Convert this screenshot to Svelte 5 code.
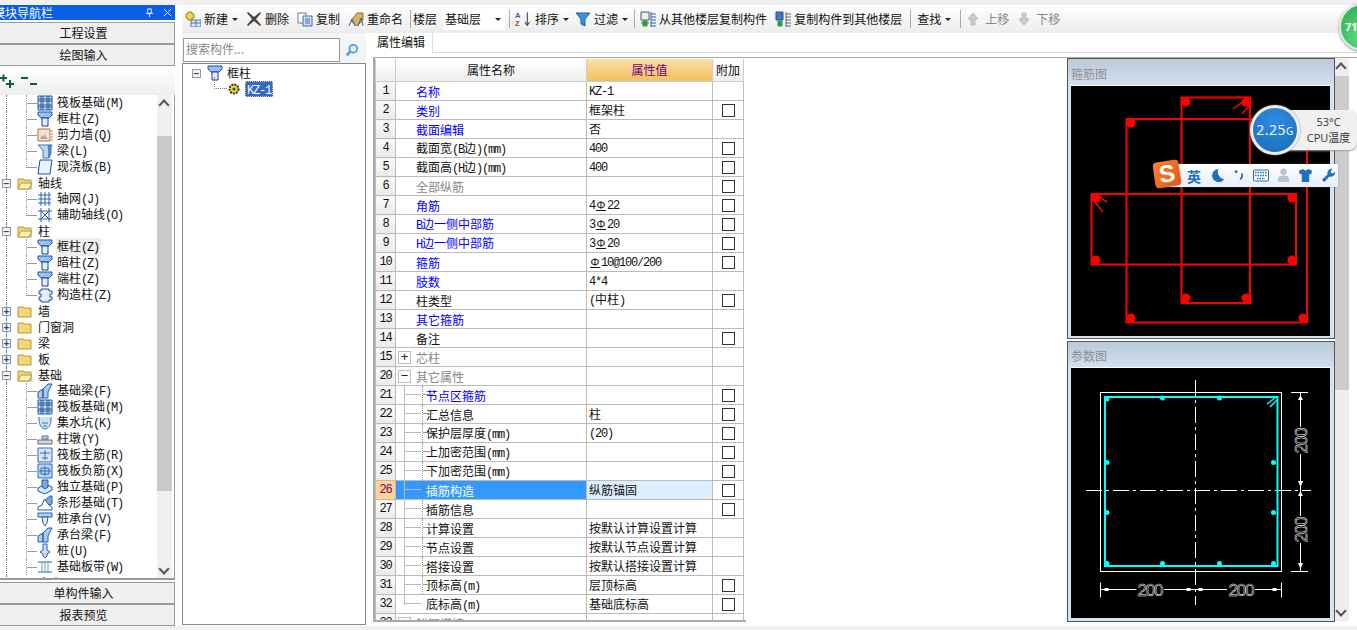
<script>
  const icons = {
    col: [["M1 1h14v3l-3 3H4L1 4z", "#9cc0ee", "#1b4f9c"], ["M5 7h6v8H5z", "#e6efff", "#123f8c"]],
    raft: [["M1 1h14v14H1z", "#d5e4f7", "#1f5aa0"], ["M1 4h14M1 6h14M1 10h14M1 12h14M4 1v14M6 1v14M10 1v14M12 1v14", "none", "#1f5aa0"]],
    wall: [["M1 2h12v12H1z", "#efe4d8", "#b5703a"], ["M3 12l2-4 1 2 2-3 1 3 2 2z", "#aaa", "none"], ["M14 4h2M14 7h2M14 10h2M14 13h2", "none", "#e07820"]],
    beam: [["M1 2h14L12 7v8H6V7z", "#bcd6f4", "#3a74bb"], ["M11 3l3-1v8l-2 5V7z", "#5c94d6", "#3a74bb"]],
    slab: [["M3 1h12l-2 14H1z", "#e8f1fc", "#1c56a3"]],
    axis: [["M1 4h13M1 8h13M1 12h13M4 1v14M8 1v14M12 1v14", "none", "#2a62b0"]],
    aux: [["M1 4h14M4 1v14M12 1v14M1 12h14M4 4l8 8M12 4l-8 8", "none", "#2a62b0"]],
    ctor: [["M4 2h8v2h3v3h-2v3h2v3h-3v2H4v-2H2v-3h2V7H2V4h2z", "#e3edfa", "#1c4f9a"]],
    fbeam: [["M1 15V9l5-3v9zM6 6l5-5h4l-4 8v6H6z", "#a9cbf0", "#245fa8"]],
    pit: [["M2 2v3c0 5 3 9 6 9s6-4 6-9V2", "#cfe2f7", "#3473bd"], ["M5 8h6M6 11h4", "none", "#3473bd"]],
    pier: [["M5 8V5h6v3zM1 9h14v4H1z", "#d5d9df", "#5b6b80"]],
    mainbar: [["M1 1h14v14H1z", "#d9e8fa", "#2c6ab8"], ["M3 6h10M8 3v10M5 11h6", "none", "#2c6ab8"]],
    negbar: [["M1 1h14v14H1z", "#bcd5f2", "#2c6ab8"], ["M2 8h12M8 3v10M4 5h8v6H4z", "none", "#2c6ab8"]],
    solo: [["M1 9l7-4 7 3v3l-7 4-7-3z", "#d7e6f8", "#1f5aa0"], ["M5 1h6v7l-3 2-3-2z", "#7ea9de", "#1f5aa0"]],
    strip: [["M1 15v-3l4-2 2-5h3l2 5 3 2v3z", "#fff", "#245fa8"], ["M8 5l5-4h2v8l-3 1z", "#7fa9dc", "#245fa8"]],
    cap: [["M1 2h14v4H1z", "#b6d0f0", "#245fa8"], ["M5 6h6l-1 6-2 3-2-3z", "#e2edfb", "#245fa8"]],
    pile: [["M6 1h4v6l3 2-3 2v2l-2 2-2-2v-2L3 9l3-2z", "#c8dcf4", "#245fa8"]],
    band: [["M1 3h14M1 13h14", "none", "#245fa8"], ["M5 3v10M8 3v10M11 3v10", "none", "#6f97cc"]],
    add: [["M3 1h4v2h2v4H7v2H3V7H1V3h2z", "#f4d24a", "#a8861c"], ["M6 9h10v7H6z", "#dce9f8", "#4a78b0"], ["M6 12h10M11 9v7", "none", "#4a78b0"]],
    del: [["M2 1l6 5 6-5 1 1-5 6 5 6-1 1-6-5-6 5-1-1 5-6-5-6z", "#444", "none"]],
    copy: [["M1 2h8v10H1z", "#fff", "#5f7ea6"], ["M6 5h9v10H6z", "#cfe0f4", "#3f6ea8"], ["M8 8h5M8 10h5M8 12h5", "none", "#3f6ea8"]],
    rename: [["M3 10L9 2h6v7l-6 6z", "#d9b45a", "#8c6f2c"], ["M1 15l3-7 3 7M10 15l3-8 2 8", "none", "#2a62b0"]],
    filter: [["M1 2h14L10 8v7l-4-2V8z", "#3f8fdc", "#1c5fa6"]],
    fromfloor: [["M1 1h8v8H1z", "#eee", "#555"], ["M3 10h4v5H3zM1 12h8", "#27a040", "#27a040"], ["M11 3h5M11 6h5M11 9h5M11 12h5M11 15h5M11 1v15", "none", "#2a62b0"]],
    tofloor: [["M1 1h7v8H1z", "#3f78cc", "#234f96"], ["M3 10h4v5H3z", "#27a040", "#27a040"], ["M11 3h5M11 6h5M11 9h5M11 12h5M11 15h5M11 1v15", "none", "#667"]],
    up: [["M8 2l5 6h-3v6H6V8H3z", "#ccc", "#bbb"]],
    down: [["M8 14l5-6h-3V2H6v6H3z", "#ccc", "#bbb"]]
  };

  const navRows = [
    { k: "raft", t: "筏板基础(M)" },
    { k: "col", t: "框柱(Z)" },
    { k: "wall", t: "剪力墙(Q)" },
    { k: "beam", t: "梁(L)" },
    { k: "slab", t: "现浇板(B)", last: true },
    { g: "open", t: "轴线" },
    { k: "axis", t: "轴网(J)" },
    { k: "aux", t: "辅助轴线(O)", last: true },
    { g: "open", t: "柱" },
    { k: "col", t: "框柱(Z)", hover: true },
    { k: "col", t: "暗柱(Z)" },
    { k: "col", t: "端柱(Z)" },
    { k: "ctor", t: "构造柱(Z)", last: true },
    { g: "closed", t: "墙" },
    { g: "closed", t: "门窗洞" },
    { g: "closed", t: "梁" },
    { g: "closed", t: "板" },
    { g: "open", t: "基础" },
    { k: "fbeam", t: "基础梁(F)" },
    { k: "raft", t: "筏板基础(M)" },
    { k: "pit", t: "集水坑(K)" },
    { k: "pier", t: "柱墩(Y)" },
    { k: "mainbar", t: "筏板主筋(R)" },
    { k: "negbar", t: "筏板负筋(X)" },
    { k: "solo", t: "独立基础(P)" },
    { k: "strip", t: "条形基础(T)" },
    { k: "cap", t: "桩承台(V)" },
    { k: "fbeam", t: "承台梁(F)" },
    { k: "pile", t: "桩(U)" },
    { k: "band", t: "基础板带(W)" },
    { g: "closed", t: "土方" }
  ];

  // n, name, value, has checkbox, colour, tree kind
  const props = [
    [1, "名称", "KZ-1", false, "blue"],
    [2, "类别", "框架柱", true, "blue"],
    [3, "截面编辑", "否", false, "blue"],
    [4, "截面宽(B边)(mm)", "400", true, ""],
    [5, "截面高(H边)(mm)", "400", true, ""],
    [6, "全部纵筋", "", true, "gray"],
    [7, "角筋", "4Φ22", true, "blue"],
    [8, "B边一侧中部筋", "3Φ20", true, "blue"],
    [9, "H边一侧中部筋", "3Φ20", true, "blue"],
    [10, "箍筋", "Φ10@100/200", true, "blue"],
    [11, "肢数", "4*4", false, "blue"],
    [12, "柱类型", "(中柱)", true, ""],
    [13, "其它箍筋", "", false, "blue"],
    [14, "备注", "", true, ""],
    [15, "芯柱", "", false, "gray", "plus"],
    [20, "其它属性", "", false, "gray", "minus"],
    [21, "节点区箍筋", "", true, "blue", "child"],
    [22, "汇总信息", "柱", true, "", "child"],
    [23, "保护层厚度(mm)", "(20)", true, "", "child"],
    [24, "上加密范围(mm)", "", true, "", "child"],
    [25, "下加密范围(mm)", "", true, "", "child"],
    [26, "插筋构造", "纵筋锚固", true, "", "child"],
    [27, "插筋信息", "", true, "", "child"],
    [28, "计算设置", "按默认计算设置计算", false, "", "child"],
    [29, "节点设置", "按默认节点设置计算", false, "", "child"],
    [30, "搭接设置", "按默认搭接设置计算", false, "", "child"],
    [31, "顶标高(m)", "层顶标高", true, "", "child"],
    [32, "底标高(m)", "基础底标高", true, "", "childlast"],
    [33, "锚固搭接", "", false, "gray", "plus"]
  ];

  const split = (t) => t.split(/([\x20-\x7e]+|Φ)/).filter(Boolean);
  const isEn = (p) => /^[\x20-\x7e]/.test(p);

  const redRects = [
    [1181.5, 97.5, 68.5, 205.5],
    [1126.5, 119, 180.5, 203.5],
    [1091.5, 194, 204.5, 70.5]
  ];
  const redDots = [
    [1186, 102], [1246, 102], [1131, 123], [1096, 198], [1292, 198], [1096, 260],
    [1292, 260], [1186, 298], [1246, 298], [1131, 318], [1303, 318]
  ];
  const cyanDots = [
    [1107, 399], [1162.5, 398], [1219.5, 398], [1107, 462.5], [1107, 512.5], [1273.5, 462.5],
    [1273.5, 512.5], [1107, 563.5], [1162.5, 563.5], [1219.5, 563.5], [1273.5, 563.5]
  ];
  const ticks = [1106.5, 1188.5, 1200.5, 1274.5];
</script>

{#snippet icon(name)}
  <svg class="ico" viewBox="0 0 16 16">
    {#each icons[name] as [d, fill, stroke]}
      <path {d} {fill} {stroke} stroke-width="1" />
    {/each}
  </svg>
{/snippet}

{#snippet txt(t)}
  {#each split(t) as p}
    {#if p === "Φ"}<span class="bar">Φ</span>{:else if isEn(p)}<span class="en">{p}</span>{:else}{p}{/if}
  {/each}
{/snippet}

{#snippet arrow()}
  <i class="caret"></i>
{/snippet}

<div class="page">
  <div class="topstrip"></div>
  <div class="shell">
    <aside class="nav">
      <div class="navtitle">
        <span class="navname">模块导航栏</span>
        <svg class="pin" viewBox="0 0 10 10"><path d="M3 1h4v5H3zM1 6h8M5 6v4" fill="none" stroke="#fff" /></svg>
        <svg class="close" viewBox="0 0 10 10"><path d="M1 1l8 8M9 1l-8 8" fill="none" stroke="#fff" /></svg>
      </div>
      <button class="navbtn">工程设置</button>
      <button class="navbtn">绘图输入</button>
      <div class="navtools">
        <svg width="14" height="14" viewBox="0 0 14 14"><path d="M0 4h7M3.500 0.500v7M6 10h8M10 6v8" fill="none" stroke="#0c5a52" stroke-width="2" /></svg>
        <svg width="18" height="14" viewBox="0 0 18 14"><path d="M1 4h7M10 10h7" fill="none" stroke="#0c5a52" stroke-width="2" /></svg>
      </div>
      <div class="navtree">
        <div class="rows">
          {#each navRows as r}
            {#if r.g}
              <div class="row group">
                <span class="exp">{r.g === "open" ? "−" : "+"}</span>
                <svg class="folder" viewBox="0 0 16 13">
                  <path d="M1 12V2h5l1 1h7v9z" fill="#f6d679" stroke="#b8963c" />
                  {#if r.g === "open"}<path d="M1 12l3-6h11l-3 6z" fill="#fff0bd" stroke="#b8963c" />{/if}
                </svg>
                <span class="grouplabel">{r.t}</span>
              </div>
            {:else}
              <div class="row child" class:last={r.last}>
                {@render icon(r.k)}
                <span class="childlabel" class:hover={r.hover}>{@render txt(r.t)}</span>
              </div>
            {/if}
          {/each}
        </div>
        <div class="navscroll">
          <span class="sarrow"></span>
          <div class="sthumb"></div>
          <span class="sarrow"></span>
        </div>
      </div>
      <button class="navbtn low">单构件输入</button>
      <button class="navbtn">报表预览</button>
    </aside>

    <div class="work">
      <div class="toolbar">
        <span class="tool">{@render icon("add")}<span>新建</span>{@render arrow()}</span>
        <span class="tool">{@render icon("del")}<span>删除</span></span>
        <span class="tool">{@render icon("copy")}<span>复制</span></span>
        <span class="tool rn">{@render icon("rename")}<span>重命名</span></span>
        <i class="sep first"></i>
        <span class="floorlabel">楼层</span>
        <span class="combo">基础层{@render arrow()}</span>
        <i class="sep"></i>
        <span class="tool sort">
          <svg class="ico az" viewBox="0 0 18 16">
            <text x="0" y="7" class="azt a">A</text>
            <text x="0" y="15" class="azt z">Z</text>
            <path d="M13 1v13M10.500 11l2.500 4 2.500-4" fill="none" stroke="#222" />
          </svg>
          <span>排序</span>{@render arrow()}
        </span>
        <span class="tool sort">{@render icon("filter")}<span>过滤</span>{@render arrow()}</span>
        <i class="sep"></i>
        <span class="tool">{@render icon("fromfloor")}<span>从其他楼层复制构件</span></span>
        <span class="tool">{@render icon("tofloor")}<span>复制构件到其他楼层</span></span>
        <i class="sep wide"></i>
        <span class="tool find">查找{@render arrow()}</span>
        <i class="sep tight"></i>
        <span class="tool off">{@render icon("up")}<span>上移</span></span>
        <span class="tool off">{@render icon("down")}<span>下移</span></span>
      </div>

      <div class="below">
        <section class="comp">
          <div class="searchrow">
            <span class="search">搜索构件...</span>
            <svg class="lens" viewBox="0 0 16 16"><circle cx="9.500" cy="6.500" r="4.500" fill="#e3f1fd" stroke="#4d9fe0" stroke-width="2" /><path d="M6 10l-4 4" stroke="#4d9fe0" stroke-width="3" /></svg>
          </div>
          <div class="comptree">
            <div class="comprow top">
              <span class="exp small">−</span>
              {@render icon("col")}
              <span class="toplabel">框柱</span>
            </div>
            <div class="comprow kid">
              <svg class="gear" viewBox="0 0 12 12"><circle cx="6" cy="6" r="4.500" fill="#f5e21c" stroke="#333" stroke-dasharray="2 1" stroke-width="2" /><circle cx="6" cy="6" r="1.500" fill="#333" /></svg>
              <span class="picked"><span class="en">KZ-1</span></span>
            </div>
          </div>
        </section>

        <main class="main">
          <div class="tabs"><span class="tab">属性编辑</span></div>
          <div class="body">
            <div class="grid">
              <table>
                <colgroup><col class="c0" /><col class="c1" /><col class="c2" /><col class="c3" /></colgroup>
                <thead>
                  <tr>
                    <th></th>
                    <th>属性名称</th>
                    <th class="hot">属性值</th>
                    <th>附加</th>
                  </tr>
                </thead>
                <tbody>
                  {#each props as [n, name, value, check, color, tree]}
                    <tr class:on={n === 26}>
                      <td class="num">{n}</td>
                      <td class="name {color} {tree || ''}">
                        {#if tree === "plus" || tree === "minus"}
                          <span class="box">{tree === "plus" ? "+" : "−"}</span>
                        {/if}
                        <span class="nm">{@render txt(name)}</span>
                      </td>
                      <td class="val">{@render txt(value)}</td>
                      <td class="add">{#if check}<span class="check"></span>{/if}</td>
                    </tr>
                  {/each}
                </tbody>
              </table>
            </div>

            <div class="figs">
              <div class="panel first">
                <h3>箍筋图</h3>
                <svg class="canvas" viewBox="1071 86 259 250">
                  <rect x="1071" y="86" width="259" height="250" fill="#000" />
                  {#each redRects as [x, y, width, height]}
                    <rect {x} {y} {width} {height} fill="none" stroke="#f00" stroke-width="2" />
                  {/each}
                  {#each redDots as [cx, cy]}
                    <circle {cx} {cy} r="4.500" fill="#f00" />
                  {/each}
                  <path d="M1233 109l15-11M1242 114l8-9M1096 195l11 7M1094 201l9 11" fill="none" stroke="#f00" stroke-width="1.500" />
                </svg>
              </div>
              <div class="panel">
                <h3>参数图</h3>
                <svg class="canvas" viewBox="1071 368 259 250">
                  <rect x="1071" y="368" width="259" height="250" fill="#000" />
                  <rect x="1100.500" y="392.500" width="181" height="179" fill="none" stroke="#fff" />
                  <path d="M1195.500 380v225M1086 490.500h225" fill="none" stroke="#fff" stroke-dasharray="16 4 3 4" />
                  <rect x="1105" y="397" width="172.500" height="169" fill="none" stroke="#0ff" stroke-width="2" />
                  <path d="M1267 404l9-7M1270 407l7-7" stroke="#0ff" stroke-width="1.500" />
                  {#each cyanDots as [cx, cy]}
                    <circle {cx} {cy} r="2.500" fill="#0ff" />
                  {/each}
                  <path d="M1291 392.500h17M1291 571.500h17M1300.500 392.500V427M1300.500 454V516M1300.500 543V571M1100.500 582.500v15M1281.500 582.500v15M1100.500 589.500h36M1164 589.500h63M1255 589.500h26.500" fill="none" stroke="#fff" />
                  <path d="M1298 400l2.500-5 2.500 5zM1298 481h5l-2.500 6zM1298 496l2.500-5 2.500 5zM1298 563h5l-2.500 6z" fill="#fff" />
                  {#each ticks as x}
                    <rect x={x - 2} y="588" width="4" height="3" fill="#fff" />
                  {/each}
                  <text class="dim" x="1150.500" y="596" textLength="26">200</text>
                  <text class="dim" x="1241.500" y="596" textLength="26">200</text>
                  <text class="dim" transform="translate(1306.500 440.500) rotate(-90)" textLength="26">200</text>
                  <text class="dim" transform="translate(1306.500 529.500) rotate(-90)" textLength="26">200</text>
                </svg>
              </div>
            </div>

            <div class="figscroll">
              <span class="sarrow"></span>
              <div class="fthumb"></div>
              <span class="sarrow end"></span>
            </div>
          </div>
        </main>
      </div>
    </div>
  </div>
  <div class="status"></div>

  <div class="ball"><span>71</span></div>

  <div class="cpu">
    <div class="cpuball">2.25<small>G</small></div>
    <div class="cpuinfo"><span>53°C</span><span>CPU温度</span></div>
  </div>

  <div class="ime">
    <span class="logo">S</span>
    <span class="imech">英</span>
    <svg class="w15" viewBox="0 0 16 16"><path d="M9 1A7 7 0 1 0 15 12 8 8 0 0 1 9 1z" fill="#1e6fc0" /></svg>
    <svg class="w12" viewBox="0 0 12 16"><circle cx="3" cy="4" r="1.500" fill="#1e6fc0" /><path d="M9 6c1 3 0 5-2 6" fill="none" stroke="#1e6fc0" stroke-width="2" /></svg>
    <svg class="w16" viewBox="0 0 16 14"><rect x="0.500" y="1.500" width="15" height="11" rx="1" fill="#fff" stroke="#1e6fc0" /><path d="M2 4h12M2 7h12M4 10h8" stroke="#1e6fc0" stroke-width="1.500" stroke-dasharray="1.500 1" /></svg>
    <svg class="w13" viewBox="0 0 14 16"><circle cx="7" cy="4" r="3.500" fill="#b7c3d2" /><path d="M1 15v-3c0-3 3-4 6-4s6 1 6 4v3z" fill="#b7c3d2" /></svg>
    <svg class="w15" viewBox="0 0 16 16"><path d="M5 1L1 3l1 4 2-1v9h8V6l2 1 1-4-4-2-3 2z" fill="#1e6fc0" /></svg>
    <svg class="w15" viewBox="0 0 16 16"><path d="M15 4l-3 2-2-2 2-3a4.500 4.500 0 0 0-5 6L1 12.500 3.500 15 9 9a4.500 4.500 0 0 0 6-5z" fill="#1e6fc0" /></svg>
  </div>
</div>

<style>
  :global(body) {
    margin: 0;
    background: #fff;
  }

  .page {
    position: relative;
    width: 1357px;
    height: 630px;
    overflow: hidden;
    display: flex;
    flex-direction: column;
    font: 12px/16px "Noto Sans CJK SC", sans-serif;
    color: #111;
    background: #fff;
  }

  .topstrip {
    height: 5px;
    background: #f0f0f0;
  }

  .shell {
    display: flex;
    gap: 7px;
    height: 621px;
  }

  .status {
    height: 4px;
    background: #f0f0f0;
  }

  .en {
    font-family: "Liberation Mono", monospace;
    font-size: 12px;
    letter-spacing: -1.2px;
  }

  .bar {
    display: inline-block;
    width: 10px;
    height: 10px;
    margin: 0 1px;
    font-size: 11px;
    line-height: 9px;
    text-align: center;
    border-bottom: 1px solid #111;
  }

  .ico {
    flex: none;
    width: 16px;
    height: 16px;
  }

  /* left navigation */
  .nav {
    flex: none;
    width: 175px;
    display: flex;
    flex-direction: column;
  }

  .navtitle {
    height: 15px;
    margin-bottom: 2px;
    background: #0b5fe6;
    color: #fff;
    display: flex;
    align-items: center;
    overflow: hidden;
    position: relative;
  }

  .navname {
    margin-left: -7px;
    font-size: 12px;
  }

  .pin,
  .close {
    position: absolute;
    top: 3px;
    width: 9px;
    height: 9px;
  }

  .pin {
    left: 145px;
  }

  .close {
    left: 163px;
  }

  .navbtn {
    flex: none;
    height: 22px;
    margin: 0;
    padding: 0 7px 0 0;
    background: #f0f0f0;
    border: 1px solid #999;
    border-width: 1px 1px 1px 0;
    font: inherit;
    color: #111;
  }

  .navbtn.low {
    margin-top: 2px;
  }

  .navtools {
    height: 29px;
    display: flex;
    align-items: center;
    gap: 6px;
    box-sizing: border-box;
    padding-top: 1px;
    background: linear-gradient(#fff, #eee);
  }

  .navtree {
    height: 485px;
    display: flex;
    overflow: hidden;
    background: #fff;
    border-right: 1px solid #999;
    border-bottom: 2px solid #999;
    box-sizing: border-box;
  }

  .rows {
    width: 157px;
    flex: none;
  }

  .row {
    position: relative;
    height: 16px;
    display: flex;
    align-items: center;
    white-space: nowrap;
  }

  .row::before {
    content: "";
    position: absolute;
    left: 6px;
    top: 0;
    bottom: 0;
    border-left: 1px dotted #777;
  }

  .group .exp {
    margin-left: 2px;
  }

  .exp {
    position: relative;
    flex: none;
    box-sizing: border-box;
    width: 9px;
    height: 9px;
    border: 1px solid #999;
    background: #eef1f6;
    color: #234a8a;
    font: bold 10px/7px "Liberation Sans", sans-serif;
    text-align: center;
  }

  .folder {
    flex: none;
    width: 16px;
    height: 13px;
    margin-left: 6px;
  }

  .grouplabel {
    margin-left: 5px;
  }

  .child {
    padding-left: 37px;
  }

  .child::after {
    content: "";
    position: absolute;
    left: 26px;
    top: 0;
    bottom: 0;
    width: 10px;
    border-left: 1px dotted #777;
    background: linear-gradient(#777, #777) no-repeat 0 8px / 10px 1px;
    opacity: 0.75;
  }

  .child.last::after {
    bottom: 7px;
  }

  .childlabel {
    margin-left: 3px;
    padding: 0 2px 0 1px;
  }

  .childlabel.hover {
    background: #eee;
  }

  .navscroll {
    width: 15px;
    display: flex;
    flex-direction: column;
    align-items: center;
    background: #f0f0f0;
    position: relative;
    overflow: hidden;
  }

  .sarrow {
    flex: none;
    height: 0;
  }

  .sarrow::before {
    content: "";
    position: absolute;
    width: 6px;
    height: 6px;
    border: solid #555;
    border-width: 2px 0 0 2px;
    transform: translate(-5px, 6px) rotate(45deg);
  }

  .navscroll .sarrow:last-child::before {
    transform: translate(-5px, -13px) rotate(225deg);
  }

  .sthumb {
    width: 15px;
    height: 355px;
    margin-top: 41px;
    background: #c9c9c9;
  }

  .navscroll .sarrow:last-child {
    margin-top: auto;
  }

  /* toolbar */
  .work {
    flex: 1;
    min-width: 0;
    display: flex;
    flex-direction: column;
  }

  .toolbar {
    height: 28px;
    flex: none;
    padding-left: 3px;
    display: flex;
    align-items: center;
    white-space: nowrap;
    background: linear-gradient(#fff, #ececec);
  }

  .tool {
    display: inline-flex;
    align-items: center;
    gap: 3px;
    margin-right: 8px;
  }

  .tool.rn {
    margin-right: 7px;
  }

  .tool.sort {
    margin-right: 6px;
  }

  .tool.find {
    margin-right: 9px;
  }

  .tool.off {
    color: #888;
    gap: 4px;
    margin-right: 7px;
  }

  .caret {
    width: 0;
    height: 0;
    margin-left: 1px;
    border: 3px solid transparent;
    border-top: 3px solid #222;
    border-bottom: 0;
  }

  .sep {
    flex: none;
    width: 1px;
    height: 18px;
    margin-right: 5px;
    background: #aaa;
  }

  .sep.first {
    margin-right: 2px;
  }

  .sep.wide {
    margin-right: 6px;
  }

  .sep.tight {
    margin-right: 4px;
  }

  .floorlabel {
    margin-right: 6px;
  }

  .combo {
    box-sizing: border-box;
    width: 62px;
    height: 22px;
    margin-right: 4px;
    padding: 0 4px 0 2px;
    display: flex;
    align-items: center;
    justify-content: space-between;
    background: #fff;
  }

  .ico.az {
    width: 17px;
  }

  .azt {
    font: bold 8px "Liberation Sans", sans-serif;
  }

  .azt.a {
    fill: #2a62b0;
  }

  .azt.z {
    fill: #c0392b;
  }

  /* component list */
  .below {
    flex: 1;
    min-height: 0;
    display: flex;
    gap: 4px;
  }

  .comp {
    flex: none;
    width: 184px;
    margin-bottom: 1px;
    display: flex;
    flex-direction: column;
    background: #f0f0f0;
  }

  .searchrow {
    height: 30px;
    flex: none;
    box-sizing: border-box;
    padding: 5px 0 0 1px;
    display: flex;
    gap: 5px;
    background: #f4f4f4;
  }

  .search {
    box-sizing: border-box;
    width: 157px;
    height: 24px;
    padding: 2px;
    border: 1px solid #999;
    background: #fff;
    color: #888;
  }

  .lens {
    width: 14px;
    height: 14px;
    margin-top: 5px;
  }

  .comptree {
    flex: 1;
    position: relative;
    box-sizing: border-box;
    padding-top: 1px;
    border: 1px solid #888;
    background: #fff;
  }

  .comprow {
    position: relative;
    height: 16px;
    display: flex;
    align-items: center;
  }

  .comprow.top {
    padding-left: 9px;
    gap: 6px;
  }

  .toplabel {
    margin-left: -2px;
  }

  .comprow.kid {
    padding-left: 45px;
    gap: 5px;
  }

  .comprow.kid::before {
    content: "";
    position: absolute;
    left: 31px;
    top: -4px;
    height: 11px;
    width: 12px;
    border: dotted #777;
    border-width: 0 0 1px 1px;
  }

  .gear {
    flex: none;
    width: 12px;
    height: 12px;
  }

  .picked {
    height: 16px;
    padding: 0 2px;
    background: #316ac5;
    color: #fff;
    outline: 1px dotted #e8d060;
    outline-offset: -1px;
    line-height: 16px;
  }

  /* property table */
  .main {
    flex: 1;
    min-width: 0;
    display: flex;
    flex-direction: column;
  }

  .tabs {
    height: 20px;
    flex: none;
    box-sizing: border-box;
    border-bottom: 1px solid #ddd;
  }

  .tab {
    display: inline-block;
    box-sizing: border-box;
    width: 63px;
    height: 20px;
    padding: 1px 0 0 7px;
    background: #fff;
    border-right: 1px solid #ddd;
  }

  .body {
    height: 569px;
    margin: 4px 0 0 3px;
    display: flex;
    border-top: 1px solid #aaa;
  }

  .grid {
    width: 371px;
    flex: none;
    padding-top: 1px;
    height: 561px;
    overflow: hidden;
    border-left: 2px solid #aaa;
    border-bottom: 2px solid #aaa;
  }

  table {
    table-layout: fixed;
    border-collapse: collapse;
    width: 368px;
  }

  .c0 {
    width: 20px;
  }

  .c1 {
    width: 191px;
  }

  .c2 {
    width: 126px;
  }

  .c3 {
    width: 31px;
  }

  th {
    height: 22px;
    padding: 0;
    font-weight: 400;
    background: linear-gradient(#fff, #eee);
    border: 1px solid #ccc;
    border-top: 0;
  }

  th.hot {
    background: linear-gradient(#fbdfa6, #f2bf60);
    color: #70007a;
  }

  td {
    height: 18px;
    padding: 0;
    border: 1px solid #bbb;
    white-space: nowrap;
    overflow: hidden;
  }

  .num {
    background: linear-gradient(#fafafa, #eaeaea);
    text-align: center;
    font-family: "Liberation Mono", monospace;
    font-size: 12px;
    letter-spacing: -1.2px;
  }

  .name {
    position: relative;
    padding-left: 20px;
  }

  .nm {
    position: relative;
    top: 1px;
  }

  .name.child,
  .name.childlast {
    padding-left: 30px;
  }

  .name.child::before,
  .name.childlast::before {
    content: "";
    position: absolute;
    left: 8px;
    top: -1px;
    bottom: -1px;
    width: 16px;
    border-left: 1px solid #bbb;
    background: linear-gradient(#bbb, #bbb) no-repeat 0 9px / 16px 1px;
  }

  .name.childlast::before {
    bottom: 8px;
  }

  .box {
    position: absolute;
    left: 2px;
    top: 3px;
    box-sizing: border-box;
    width: 13px;
    height: 13px;
    border: 1px solid #bbb;
    font: 13px/10px "Liberation Sans", sans-serif;
    text-align: center;
    color: #222;
  }

  .blue {
    color: #00f;
  }

  .gray {
    color: #888;
  }

  .val {
    padding-left: 2px;
  }

  .add {
    text-align: center;
  }

  .check {
    display: block;
    box-sizing: border-box;
    width: 13px;
    height: 13px;
    margin: 0 auto;
    border: 1px solid #333;
    background: #fff;
  }

  tr.on .num {
    background: #fdd58e;
    color: #70007a;
  }

  tr.on .name {
    background: #3399ff;
    color: #fff;
  }

  tr.on .val {
    background: #ddeeff;
  }

  /* drawings */
  .figs {
    margin-left: 321px;
    flex: none;
    width: 268px;
    display: flex;
    flex-direction: column;
    gap: 2px;
    height: 564px;
  }

  .panel {
    flex: none;
    height: 281px;
    box-sizing: border-box;
    padding: 0 4px 0 3px;
    border: 1px solid #555;
    background: linear-gradient(#b9c9da, #d6e4f2 30px);
    display: flex;
    flex-direction: column;
  }

  h3 {
    flex: none;
    height: 25px;
    margin: 0;
    box-sizing: border-box;
    padding: 6px 0 0;
    font-size: 12px;
    line-height: 16px;
    font-weight: 400;
    color: #909090;
  }

  .panel.first h3 {
    height: 26px;
    padding-top: 7px;
  }

  .canvas {
    display: block;
    flex: none;
    width: 259px;
    height: 250px;
    border-top: 1px solid #fff;
  }

  .dim {
    font: 17px "Liberation Sans", sans-serif;
    fill: none;
    stroke: #fff;
    stroke-width: 0.5px;
    text-anchor: middle;
  }

  .figscroll {
    position: relative;
    flex: none;
    width: 14px;
    height: 563px;
    background: #eee;
    display: flex;
    flex-direction: column;
    align-items: center;
  }

  .figscroll .sarrow {
    position: relative;
  }

  .fthumb {
    flex: none;
    width: 14px;
    height: 314px;
    margin-top: 18px;
    background: #ccc;
  }

  .figscroll .sarrow.end {
    margin-top: auto;
  }

  .figscroll .sarrow.end::before {
    transform: translate(-5px, -14px) rotate(225deg);
  }

  /* desktop overlays */
  .ball {
    position: absolute;
    left: 1339px;
    top: 3px;
    width: 48px;
    height: 48px;
    box-sizing: border-box;
    border-radius: 50%;
    border: 2px solid #dfe8df;
    box-shadow: 0 1px 3px #888;
    background: radial-gradient(circle at 50% 70%, #5fe07f, #2aa84c);
    color: #fff;
    font: bold 11px/44px "Open Sans", sans-serif;
    padding-left: 4px;
  }

  .cpu {
    position: absolute;
    left: 1250px;
    top: 105px;
    display: flex;
    align-items: center;
  }

  .cpuball {
    position: relative;
    z-index: 1;
    box-sizing: border-box;
    width: 50px;
    height: 50px;
    border-radius: 50%;
    border: 3px solid #eee;
    box-shadow: 0 0 2px #777;
    background: radial-gradient(circle at 50% 30%, #2f8be0, #1a6cb8);
    color: #fff;
    font: 14px/44px "Open Sans", sans-serif;
    text-align: center;
    letter-spacing: 0.5px;
  }

  .cpuball small {
    font-size: 10px;
  }

  .cpuinfo {
    box-sizing: border-box;
    width: 83px;
    height: 40px;
    margin-left: -26px;
    padding-left: 26px;
    border-radius: 0 8px 8px 0;
    background: #f0f0f0;
    box-shadow: 0 1px 2px #999;
    display: flex;
    flex-direction: column;
    align-items: center;
    justify-content: center;
    font: 11px/16px "Open Sans", "Noto Sans CJK SC", sans-serif;
    color: #333;
  }

  .ime {
    position: absolute;
    left: 1166px;
    top: 164px;
    width: 172px;
    height: 23px;
    box-sizing: border-box;
    padding-left: 21px;
    display: flex;
    align-items: center;
    gap: 8px;
    background: linear-gradient(#fff, #e6eef7);
    box-shadow: 0 0 1px #789;
  }

  .ime svg {
    flex: none;
    height: 15px;
  }

  .w12 {
    width: 12px;
  }

  .w13 {
    width: 13px;
  }

  .w15 {
    width: 15px;
  }

  .w16 {
    width: 16px;
  }

  .imech {
    color: #1e6fc0;
    font-size: 14px;
    font-weight: 700;
    width: 15px;
  }

  .logo {
    position: absolute;
    left: -12px;
    top: -3px;
    width: 26px;
    height: 26px;
    border-radius: 4px;
    transform: rotate(-8deg);
    background: linear-gradient(135deg, #f8872c, #e8531a);
    color: #fff;
    font: 900 24px/26px "Liberation Sans", sans-serif;
    text-align: center;
  }
</style>
